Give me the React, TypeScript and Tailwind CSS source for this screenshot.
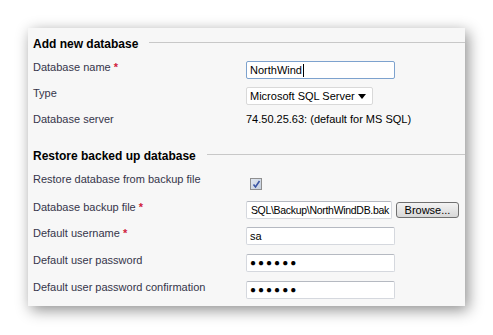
import React from 'react';

const font = { fontFamily: '"Liberation Sans", Arial, sans-serif' };

const Req = () => <span className="text-[#d0213b] font-bold"> *</span>;

const Heading = ({ title, className = '' }: { title: string; className?: string }) => (
  <div className={`flex items-center ${className}`}>
    <span className="text-[12px] leading-[15px] font-bold text-black whitespace-nowrap">{title}</span>
    <div className="flex-1 h-px bg-[#c8c8c8] ml-[11px] -mt-[5px]" />
  </div>
);

const TextBox = ({ children, focused = false, width = 'w-[149px]' }: { children?: React.ReactNode; focused?: boolean; width?: string }) => (
  <div
    className={`${width} h-[18px] bg-white border rounded-[2px] flex items-center px-[3px] overflow-hidden text-[11px] text-black ${
      focused ? 'border-[#7da2ce]' : 'border-[#d5d8de] border-t-[#b5b9c1]'
    }`}
  >
    {children}
  </div>
);

const Dots = () => (
  <span className="text-[10px] font-bold tracking-[2px] leading-none text-black">●●●●●●</span>
);

export default function App() {
  return (
    <div className="w-[493px] h-[335px] bg-white pt-[28px] pl-[28px]" style={font}>
      <div className="w-[437px] h-[278px] bg-[#f7f7f7] shadow-[3px_4px_14px_rgba(0,0,0,0.45)] pl-[5px] pt-[9px] text-[11px] leading-[13px] text-[#35354a]">
        <Heading title="Add new database" />

        <div className="flex items-start mt-[9px]">
          <div className="w-[213px]">
            Database name<Req />
          </div>
          <TextBox focused>
            <span>NorthWind</span>
            <span className="w-px h-[13px] bg-black ml-px" />
          </TextBox>
        </div>

        <div className="flex items-start mt-[8px]">
          <div className="w-[213px]">Type</div>
          <div className="w-[127px] h-[18px] bg-white border border-[#d9d9d9] rounded-[2px] flex items-center justify-between pl-[3px] pr-[6px] text-black">
            <span>Microsoft SQL Server</span>
            <svg width="8" height="5" viewBox="0 0 8 5">
              <path d="M0 0h8L4 5z" fill="#000" />
            </svg>
          </div>
        </div>

        <div className="flex items-start mt-[8px]">
          <div className="w-[213px]">Database server</div>
          <div className="text-black">74.50.25.63: (default for MS SQL)</div>
        </div>

        <Heading title="Restore backed up database" className="mt-[23px]" />

        <div className="flex items-start mt-[9px]">
          <div className="w-[217px]">Restore database from backup file</div>
          <div className="mt-[5px] w-[12px] h-[12px] border border-[#8f8f8f] bg-gradient-to-br from-[#dfe6f0] to-[#c6d0de] flex items-center justify-center">
            <svg width="9" height="9" viewBox="0 0 9 9">
              <path d="M1.5 4.5l2 2.5L7.5 1" stroke="#3a55a4" strokeWidth="1.6" fill="none" />
            </svg>
          </div>
        </div>

        <div className="flex items-start mt-[11px]">
          <div className="w-[213px]">
            Database backup file<Req />
          </div>
          <div className="w-[146px] h-[18px] bg-white border border-[#d5d8de] border-t-[#b5b9c1] rounded-[2px] flex items-center justify-end pr-[2px] overflow-hidden text-[10.5px] text-black">
            <span className="whitespace-nowrap tracking-[-0.3px]">SQL\Backup\NorthWindDB.bak</span>
          </div>
          <button className="ml-[4px] mt-px w-[63px] h-[16px] rounded-[3px] border border-[#707070] bg-gradient-to-b from-[#f3f3f3] to-[#d8d8d8] text-[11px] leading-none text-black">
            Browse...
          </button>
        </div>

        <div className="flex items-start mt-[8px]">
          <div className="w-[213px]">
            Default username<Req />
          </div>
          <TextBox>sa</TextBox>
        </div>

        <div className="flex items-start mt-[9px]">
          <div className="w-[213px]">Default user password</div>
          <TextBox>
            <Dots />
          </TextBox>
        </div>

        <div className="flex items-start mt-[9px]">
          <div className="w-[213px]">Default user password confirmation</div>
          <TextBox>
            <Dots />
          </TextBox>
        </div>
      </div>
    </div>
  );
}
